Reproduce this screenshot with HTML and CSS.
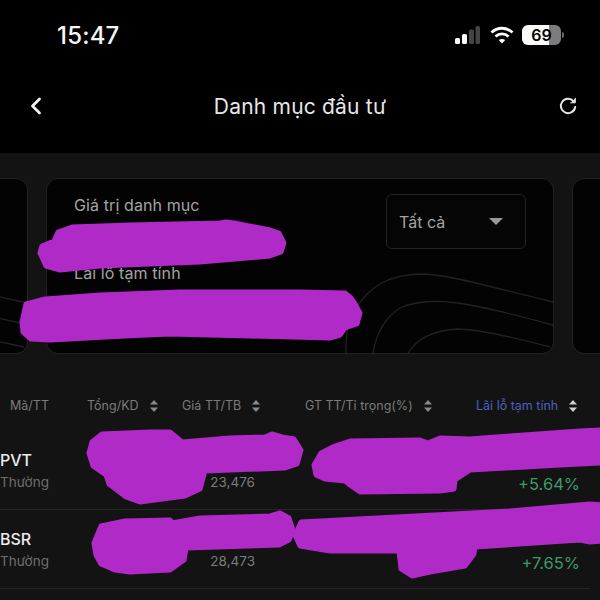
FILE: index.html
```html
<!DOCTYPE html>
<html lang="vi">
<head>
<meta charset="utf-8">
<title>Danh mục đầu tư</title>
<link rel="stylesheet" href="styles.css">
</head>
<body>
<div class="app">
  <header class="top">
    <div class="status">
      <span class="clock">15:47</span>
      <div class="status-icons">
        <svg class="signal" width="26" height="20" viewBox="0 0 26 20"><rect x="1" y="13" width="5" height="6" rx="1.5" fill="#fff"/><rect x="8" y="9" width="5" height="10" rx="1.5" fill="#fff"/><rect x="15" y="4.500" width="5" height="14.500" rx="1.500" fill="#444"/><rect x="21.500" y="1" width="4.500" height="18" rx="1.500" fill="#444"/></svg>
        <svg class="wifi" width="24" height="18" viewBox="0 0 24 18" fill="none" stroke="#fff" stroke-width="2.800"><path d="M1.500 6.500C7.500 .8 16.500 .8 22.500 6.500"/><path d="M5.500 10.500C9.300 7 14.700 7 18.500 10.500"/><path d="M12 17.500 8.800 14.100C10.700 12.500 13.300 12.500 15.200 14.100Z" fill="#fff" stroke="none"/></svg>
        <div class="battery"><span class="battery-num">69</span></div>
        <span class="battery-tip"></span>
      </div>
    </div>
    <nav class="nav">
      <svg class="back" width="12" height="18" viewBox="0 0 12 18" fill="none" stroke="#f2f2f2" stroke-width="2.800" stroke-linecap="round" stroke-linejoin="round"><path d="M9.500 2 2.500 9l7 7"/></svg>
      <h1 class="title">Danh mục đầu tư</h1>
      <svg class="refresh" width="20" height="20" viewBox="0 0 20 20" fill="none" stroke="#e6e6e6" stroke-width="2" stroke-linecap="round"><path d="M15.500 5.200A7.200 7.200 0 1 0 17.200 11"/><path d="M17.300 2.200v4.600h-4.600" fill="#e6e6e6" stroke-width="1" stroke-linejoin="round"/></svg>
    </nav>
  </header>

  <main class="body">
    <section class="carousel">
      <div class="card">
        <svg class="contours" viewBox="-480 178 508 176"><path d="M-8 295 27 303M-8 317 26 324M-8 340 24 347"/></svg>
      </div>
      <div class="card card-main">
        <svg class="contours" viewBox="46 178 508 176"><path d="M346 353C345 325 352 310 362 300 375 283 393 275 420 274 440 274 457 278 553 302"/><path d="M373 353C376 335 384 318 400 308 415 301 440 300 457 303 480 306 520 316 553 325"/><path d="M408 353C418 338 432 331 457 329 480 329 520 339 550 347"/></svg>
        <div class="summary">
          <div class="label">Giá trị danh mục</div>
          <div class="label label-second">Lãi lỗ tạm tính</div>
        </div>
        <div class="select">
          <span>Tất cả</span>
          <span class="caret"></span>
        </div>
      </div>
      <div class="card"></div>
    </section>

    <section class="table">
      <div class="grid head">
        <div class="hcell">Mã/TT</div>
        <div class="hcell">Tổng/KD<svg class="sort" viewBox="0 0 10 14"><path d="M5 1 9 5.500H1Z"/><path d="M5 13 9 8.500H1Z"/></svg></div>
        <div class="hcell">Giá TT/TB<svg class="sort" viewBox="0 0 10 14"><path d="M5 1 9 5.500H1Z"/><path d="M5 13 9 8.500H1Z"/></svg></div>
        <div class="hcell">GT TT/Tỉ trọng(%)<svg class="sort" viewBox="0 0 10 14"><path d="M5 1 9 5.500H1Z"/><path d="M5 13 9 8.500H1Z"/></svg></div>
        <div class="hcell hcell-active">Lãi lỗ tạm tính<svg class="sort sort-active" viewBox="0 0 10 14"><path d="M5 1 9 5.500H1Z"/><path d="M5 13 9 8.500H1Z"/></svg></div>
      </div>
      <div class="grid row">
        <div><div class="sym">PVT</div><div class="sub">Thường</div></div>
        <div></div>
        <div class="num">23,476</div>
        <div></div>
        <div class="pct">+5.64%</div>
      </div>
      <div class="grid row">
        <div><div class="sym">BSR</div><div class="sub">Thường</div></div>
        <div></div>
        <div class="num">28,473</div>
        <div></div>
        <div class="pct">+7.65%</div>
      </div>
    </section>
  </main>

  <svg class="redactions" viewBox="0 0 600 600">
    <path d="M40 253 42 246 54 241 58 232 72 227 130 225 220 223 226 222 234 223 270 230 279 233 284 243 281 252 270 256 200 262 100 266 60 270 46 266Z"/>
    <path d="M22 322 26 304 45 299 100 295 180 292 300 292 345 293 351 298 355 304 360 313 357 324 345 328 340 335 330 338 250 336 170 334 125 336 50 340 31 339 23 332Z"/>
    <path d="M89 453 92 442 102 434 150 432 170 432 182 442 230 438 265 437 272 434 282 437 294 439 301 450 297 464 285 468 205 471 200 489 185 496 140 502 126 497 109 484 106 475 93 466Z"/>
    <path d="M314 465 321 453 335 446 350 441 420 440 428 443 440 438 470 439 510 436 580 431 602 430 602 463 560 465 470 470 455 480 454 489 440 491 360 492 350 485 345 481 325 479 316 475Z"/>
    <path d="M94 543 101 526 125 521 170 520 172 523 200 518 270 516 280 513 289 518 293 530 289 540 279 545 186 548 184 560 170 570 130 572 115 570 101 564 96 555Z"/>
    <path d="M295 535 301 522 510 511 590 504 602 505 602 541 590 542 580 540 475 547 474 554 465 566 430 572 412 576 401 569 399 551 330 551 300 546Z"/>
  </svg>
</div>
</body>
</html>
```
FILE: styles.css
```css
* { box-sizing: border-box; margin: 0; padding: 0; }
html, body { width: 600px; height: 600px; overflow: hidden; background: #000; }
body { font-family: Inter, "Noto Sans", "Liberation Sans", sans-serif; }

.app { position: relative; width: 600px; height: 600px; display: flex; flex-direction: column; overflow: hidden; background: #131313; }

.top { background: #000; height: 153px; flex: none; }
.status { height: 70px; display: flex; align-items: center; justify-content: space-between; padding: 0 36px 0 57px; }
.clock { font-size: 24px; font-weight: 500; color: #f5f5f5; letter-spacing: .2px; }
.status-icons { display: flex; align-items: center; }
.signal { margin-right: 10px; }
.wifi { margin-right: 8px; }
.battery { width: 39px; height: 20px; border-radius: 6px; background: linear-gradient(90deg, #fbfbfb 0 69%, #7c7c7c 69%); display: flex; align-items: center; justify-content: center; }
.battery-num { font-size: 16px; font-weight: 600; color: #000; }
.battery-tip { width: 2px; height: 6px; margin-left: 1px; background: #666; border-radius: 0 2px 2px 0; }

.nav { height: 72px; display: flex; align-items: center; justify-content: space-between; padding: 0 22px 0 30px; }
.title { font-size: 21px; font-weight: 400; color: #e6e6e6; letter-spacing: .2px; }

.body { flex: 1; min-height: 0; display: flex; flex-direction: column; }

.carousel { display: flex; justify-content: center; gap: 18px; padding-top: 25px; }
.card { position: relative; flex: 0 0 508px; height: 176px; background: #030303; border: 1px solid #232323; border-radius: 12px; overflow: hidden; }
.card-main { display: flex; justify-content: space-between; align-items: flex-start; padding: 15px 27px 0 27px; }
.contours { position: absolute; inset: -1px; width: 508px; height: 176px; fill: none; stroke: #222; stroke-width: 1.300; }

.summary { position: relative; }
.label { font-size: 16px; line-height: 22px; color: #a3a3a3; letter-spacing: .1px; }
.label-second { margin-top: 46px; }

.select { position: relative; width: 140px; height: 55px; border: 1px solid #242424; border-radius: 6px; background: #050505; display: flex; align-items: center; justify-content: space-between; padding: 0 22px 0 12px; font-size: 16px; color: #a3a3a3; }
.caret { width: 0; height: 0; border-left: 7px solid transparent; border-right: 7px solid transparent; border-top: 7px solid #9a9a9a; }

.table { margin-top: 26px; }
.grid { display: grid; grid-template-columns: 77px 95px 123px 171px 116px; padding-left: 10px; }
.head { height: 51px; align-items: center; }
.hcell { display: flex; align-items: center; gap: 10px; font-size: 12.500px; color: #7b7b7b; white-space: nowrap; }
.hcell-active { color: #4c60bd; }
.sort { width: 10px; height: 14px; fill: #8a8a8a; flex: none; }
.sort-active { fill: #cfcfcf; }

.row { height: 78px; border-bottom: 1px solid #262626; margin-left: -10px; width: 600px; padding-left: 10px; box-sizing: border-box; align-items: start; height: 79px; }
.sym { margin-top: 18px; font-size: 16px; line-height: 22px; font-weight: 500; color: #ececec; }
.sub { font-size: 13.500px; line-height: 22px; color: #6e6e6e; }
.num { margin-top: 40px; padding-right: 40px; text-align: right; font-size: 13.500px; line-height: 22px; color: #7c7c7c; }
.pct { margin-top: 40px; padding-right: 2px; text-align: right; font-size: 16.500px; line-height: 26px; color: #3f9a6e; }

.redactions { position: absolute; inset: 0; width: 600px; height: 600px; fill: #b02ac8; stroke: #b02ac8; stroke-width: 5; stroke-linejoin: round; }
```
